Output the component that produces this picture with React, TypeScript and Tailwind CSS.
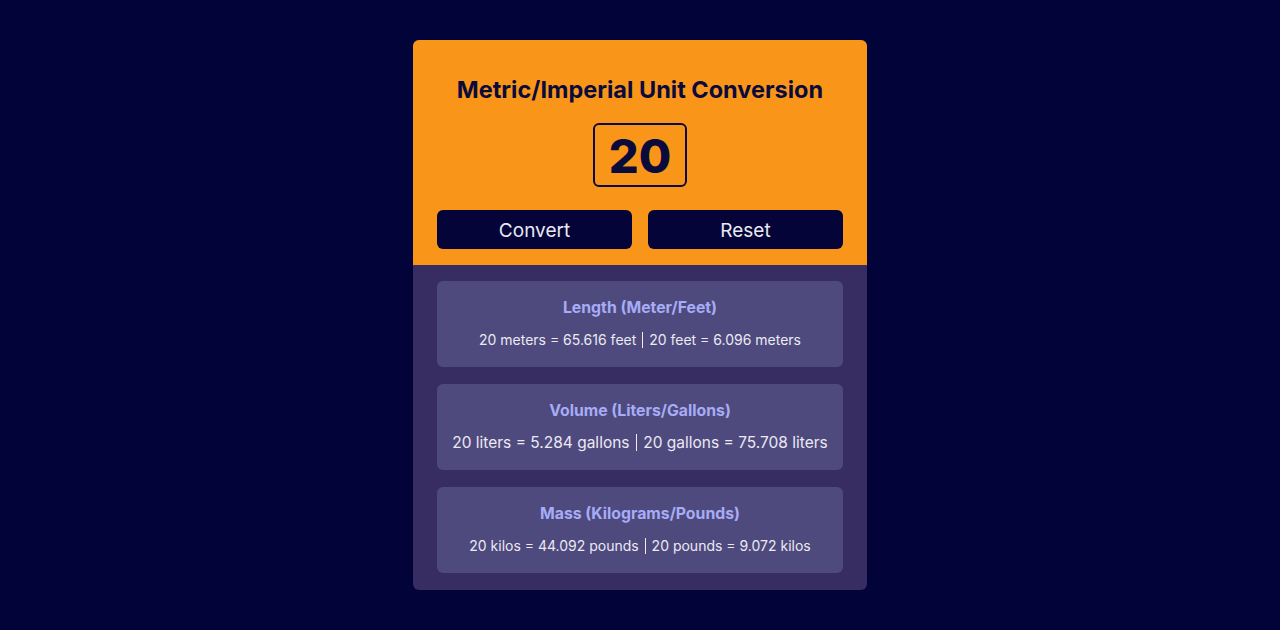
import React from "react";

function Sep() {
  return <span className="mx-[2px] inline-block w-px h-[1.15em] align-[-0.22em] bg-[#f4ede2]" />;
}

function Card({ title, a, b, big }: { title: string; a: string; b: string; big?: boolean }) {
  return (
    <div className="bg-[#4f4a7d] rounded-md flex flex-col items-center pt-[15px] pb-[16px] gap-[9px]">
      <div className="text-[15.8px] leading-6 font-bold text-[#a7acf6]">{title}</div>
      <div className={(big ? "text-[15.5px]" : "text-[14px]") + " leading-[22px] text-[#ebe9f3]"}>
        {a}
        <Sep />
        {b}
      </div>
    </div>
  );
}

export default function App() {
  return (
    <div
      className="w-full h-[630px] bg-[#020339] flex justify-center pt-10"
      style={{ fontFamily: "Inter, 'Noto Sans', sans-serif" }}
    >
      <div className="w-[454px] h-[550px] rounded-md overflow-hidden flex flex-col bg-[#372d62]">
        <div className="bg-[#f99619] flex flex-col items-center pt-[34px] pb-4 px-6">
          <h1 className="text-[23.5px] leading-8 font-bold text-[#0b0b3b]">Metric/Imperial Unit Conversion</h1>
          <div className="mt-[17px] w-[94px] h-16 border-2 border-[#0b0b3b] rounded-md flex items-center justify-center text-[47px] leading-none font-extrabold text-[#0b0b3b]">
            20
          </div>
          <div className="mt-[23px] w-full grid grid-cols-2 gap-4">
            <button className="h-[39px] bg-[#040439] rounded-md text-[19px] leading-none pt-[2px] text-[#e9e9f1]">Convert</button>
            <button className="h-[39px] bg-[#040439] rounded-md text-[19px] leading-none pt-[2px] text-[#e9e9f1]">Reset</button>
          </div>
        </div>
        <div className="flex-1 px-6 pt-4 flex flex-col gap-[17px]">
          <Card title="Length (Meter/Feet)" a="20 meters = 65.616 feet " b=" 20 feet = 6.096 meters" />
          <Card title="Volume (Liters/Gallons)" a="20 liters = 5.284 gallons " b=" 20 gallons = 75.708 liters" big />
          <Card title="Mass (Kilograms/Pounds)" a="20 kilos = 44.092 pounds " b=" 20 pounds = 9.072 kilos" />
        </div>
      </div>
    </div>
  );
}
